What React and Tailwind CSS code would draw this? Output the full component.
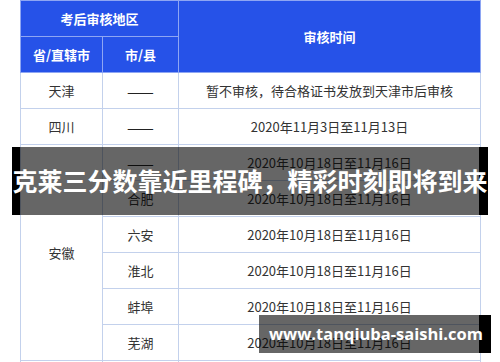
const rows = [
  { city: '——', time: '2020年10月18日至11月16日' },
  { city: '合肥', time: '2020年10月18日至11月16日' },
  { city: '六安', time: '2020年10月18日至11月16日' },
  { city: '淮北', time: '2020年10月18日至11月16日' },
  { city: '蚌埠', time: '2020年10月18日至11月16日' },
  { city: '芜湖', time: '2020年10月18日至11月16日' },
];

const td = 'border border-[#c3d1ec] text-center align-middle p-0';
const th = 'border border-[#8ea6f3] text-center align-middle p-0 font-bold text-white';

function Dash() {
  return <span className="text-[16px] text-[#222]">——</span>;
}

export default function App() {
  return (
    <div
      className="relative w-[500px] h-[362px] overflow-hidden bg-white text-[13px] text-[#333]"
      style={{ fontFamily: '"Noto Sans CJK SC", "Noto Sans", sans-serif' }}
    >
      <table className="ml-[20px] w-[460px] table-fixed border-collapse leading-none">
        <colgroup>
          <col className="w-[82px]" />
          <col className="w-[76px]" />
          <col className="w-[302px]" />
        </colgroup>
        <thead className="bg-[#2652e8]">
          <tr className="h-[36px]">
            <th colSpan={2} className={th}>考后审核地区</th>
            <th rowSpan={2} className={th}>审核时间</th>
          </tr>
          <tr className="h-[36px]">
            <th className={th}>省/直辖市</th>
            <th className={th}>市/县</th>
          </tr>
        </thead>
        <tbody>
          <tr className="h-[36px]">
            <td className={td}>天津</td>
            <td className={td}><Dash /></td>
            <td className={td}>暂不审核，待合格证书发放到天津市后审核</td>
          </tr>
          <tr className="h-[36px]">
            <td className={td}>四川</td>
            <td className={td}><Dash /></td>
            <td className={td}>2020年11月3日至11月13日</td>
          </tr>
          {rows.map((r, i) => (
            <tr key={i} className="h-[36px]">
              {i === 0 && (
                <td rowSpan={6} className={td}>安徽</td>
              )}
              <td className={td}>{r.city === '——' ? <Dash /> : r.city}</td>
              <td className={td}>{r.time}</td>
            </tr>
          ))}
          <tr className="h-[36px]">
            <td className={td}></td>
            <td className={td}></td>
            <td className={td}></td>
          </tr>
        </tbody>
      </table>

      {/* title banner */}
      <div className="absolute left-[12px] top-[147px] w-[476px] h-[68px] flex">
        <div className="w-[8px] bg-black" />
        <div className="flex-1 bg-black/60" />
        <div className="w-[9px] bg-black" />
        <div className="absolute inset-0 flex items-center justify-center pb-[2px] text-white font-bold text-[25px] leading-none whitespace-nowrap">
          克莱三分数靠近里程碑，精彩时刻即将到来
        </div>
      </div>

      {/* watermark */}
      <div className="absolute left-[259px] top-[315px] w-[232px] h-[38px] flex">
        <div className="flex-1 bg-black/60" />
        <div className="w-[12px] bg-black" />
        <div
          className="absolute inset-0 flex items-center pl-[10px] text-white font-bold text-[16.5px] leading-none whitespace-nowrap"
          style={{ fontFamily: '"Open Sans", "Noto Sans", sans-serif' }}
        >
          www.tanqiuba-saishi.com
        </div>
      </div>
    </div>
  );
}
